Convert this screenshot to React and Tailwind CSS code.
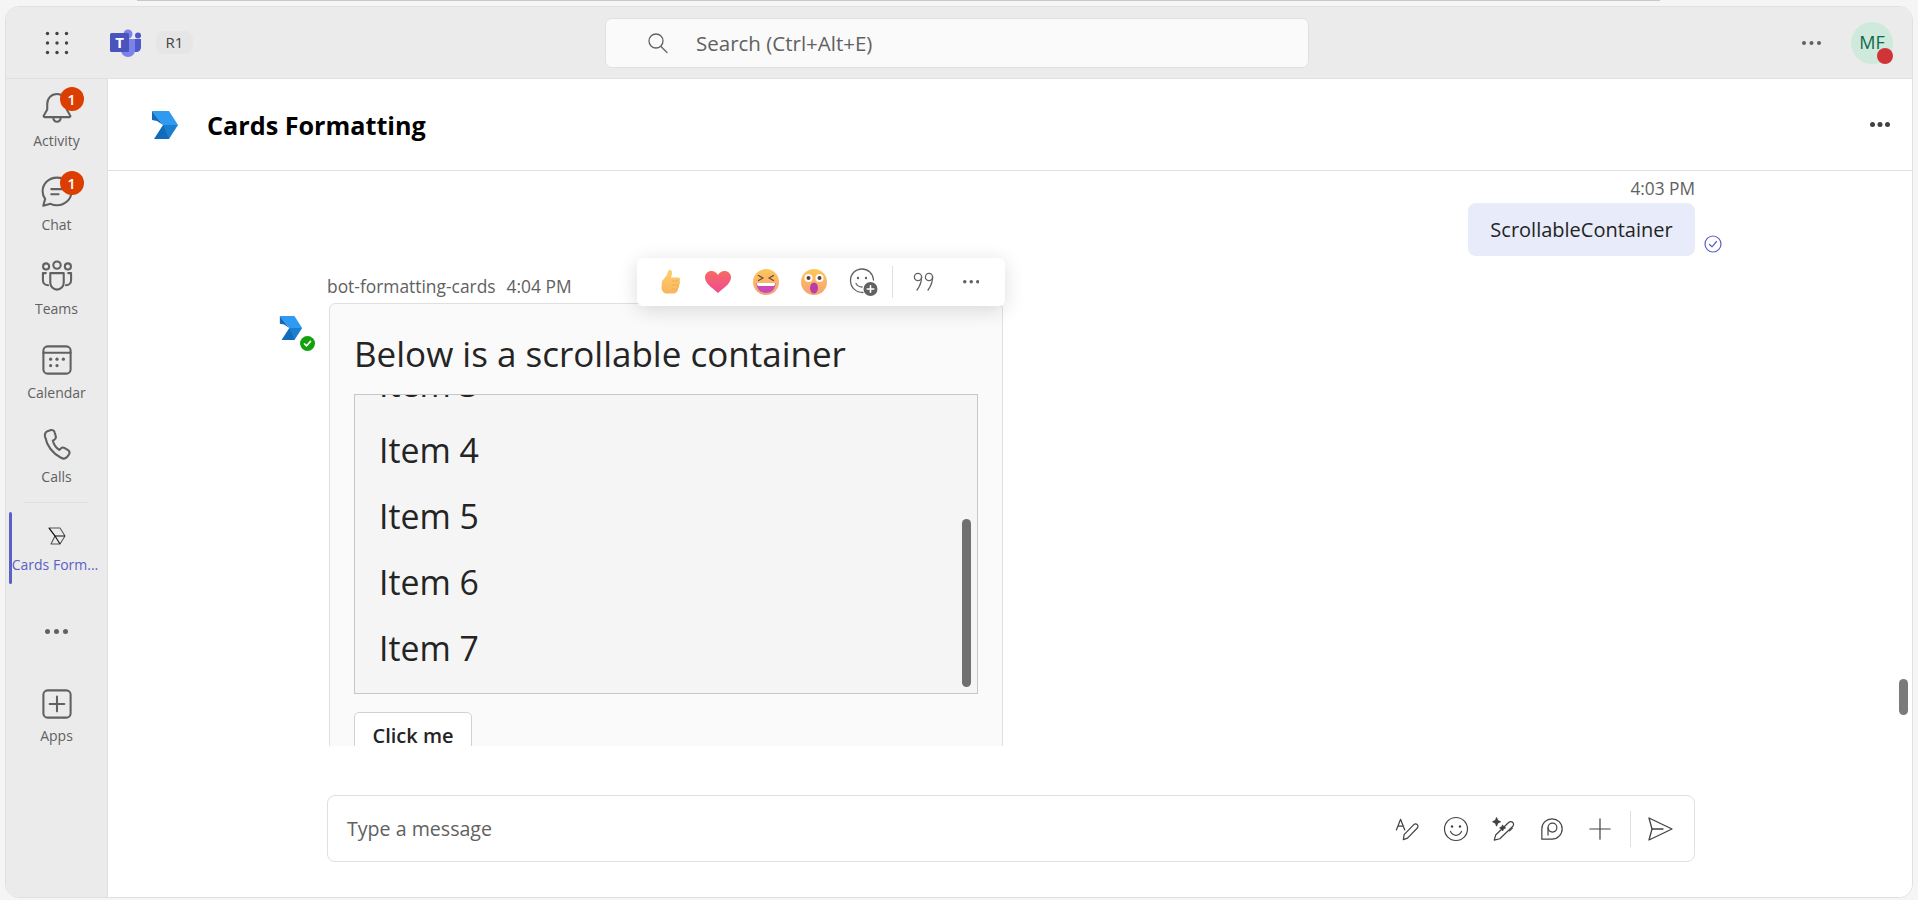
import { useId } from "react";

const Stroke = ({ size = 32, vb = "2 2 20 20", children, className = "" }) => (
  <svg width={size} height={size} viewBox={vb} fill="none" stroke="#616161" strokeWidth="1.3" strokeLinecap="round" strokeLinejoin="round" className={className}>
    {children}
  </svg>
);

const ChevronLogo = ({ w = 26, h = 28 }) => (
  <svg width={w} height={h} viewBox="0 0 26 28">
    <path d="M0 0H17L26 14H11Z" fill="#2f9bf0" />
    <path d="M0 0L11 14L5 10L0 9Z" fill="#0f6cbd" />
    <path d="M11 14H26L17 28H10Z" fill="#1b7fce" />
    <path d="M11 14L17 28H2Z" fill="#0f6cbd" />
  </svg>
);

const TeamsLogo = () => (
  <svg width="32" height="28" viewBox="0 0 32 28">
    <circle cx="28" cy="6.5" r="3" fill="#5059c9" />
    <path d="M22 10H31V18C31 21 29 23 26 23H22Z" fill="#5059c9" />
    <circle cx="18" cy="5" r="4.5" fill="#7b83eb" />
    <path d="M11 10H25V21C25 25 22 28 18 28C14 28 11 25 11 21Z" fill="#7b83eb" />
    <rect x="0" y="4" width="19" height="19" rx="1.5" fill="#4b53bc" />
    <text x="9.5" y="19" textAnchor="middle" fontSize="15" fontWeight="700" fill="#fff" fontFamily="Open Sans">T</text>
  </svg>
);

const NavIcons = {
  bell: (
    <Stroke>
      <path d="M12 3.2C8.4 3.2 5.9 6 5.9 9.5V13L3.7 16.8C3.5 17.2 3.7 17.7 4.2 17.7H19.8C20.3 17.7 20.5 17.2 20.3 16.8L18.1 13V9.5C18.1 6 15.6 3.2 12 3.2Z" />
      <path d="M9.6 17.9C9.8 19.6 10.8 20.6 12 20.6C13.2 20.6 14.2 19.6 14.4 17.9" />
    </Stroke>
  ),
  chat: (
    <Stroke>
      <path d="M12 3C7 3 3 6.8 3 11.6C3 13.4 3.6 15 4.6 16.3L3.4 20.6L8 19.4C9.2 20 10.6 20.3 12 20.3C17 20.3 21 16.5 21 11.8C21 7 17 3 12 3Z" />
      <path d="M8.4 10.2H15.6M8.4 13.4H13" />
    </Stroke>
  ),
  teams: (
    <Stroke>
      <circle cx="12" cy="5.2" r="2.3" />
      <circle cx="5.2" cy="6" r="1.9" />
      <circle cx="18.8" cy="6" r="1.9" />
      <path d="M7.8 10.2H16.2V16.2C16.2 18.6 14.3 20.5 12 20.5C9.7 20.5 7.8 18.6 7.8 16.2Z" />
      <path d="M5 10.2H3.2V14.6C3.2 16.4 4.6 17.8 6.4 17.8" />
      <path d="M19 10.2H20.8V14.6C20.8 16.4 19.4 17.8 17.6 17.8" />
    </Stroke>
  ),
  calendar: (
    <Stroke>
      <rect x="3.5" y="3.5" width="17" height="17" rx="2.6" />
      <path d="M3.5 7.5H20.5" />
      <g fill="#616161" stroke="none">
        <circle cx="8" cy="11.5" r="1" />
        <circle cx="12" cy="11.5" r="1" />
        <circle cx="16" cy="11.5" r="1" />
        <circle cx="8" cy="15.5" r="1" />
        <circle cx="12" cy="15.5" r="1" />
      </g>
    </Stroke>
  ),
  calls: (
    <Stroke>
      <path d="M8.2 3.3L6.5 3.8C5 4.3 4.2 5.7 4.5 7.3C5.7 13 9.6 18 14.5 20.6C16 21.4 17.7 21 18.6 19.7L19.4 18.6C20 17.7 19.8 16.5 18.9 15.9L16.8 14.6C16 14.1 15 14.2 14.4 14.8L13.4 15.7C11.4 14.3 10 12.2 9.4 9.9L10.5 9.2C11.2 8.7 11.4 7.8 11.2 7L10.5 4.7C10.2 3.6 9.2 3 8.2 3.3Z" />
    </Stroke>
  ),
  apps: (
    <Stroke>
      <rect x="3.5" y="3.5" width="17" height="17" rx="2.6" />
      <path d="M12 7.4V16.6M7.4 12H16.6" />
    </Stroke>
  ),
  cards: (
    <svg width="18" height="18" viewBox="0 0 18 18" fill="none" stroke="#555" strokeWidth="1.1" strokeLinejoin="round">
      <path d="M1 1H12L17 9L12 17H3L7 9Z" />
      <path d="M1 1L7 9H17" stroke="#111" />
      <path d="M7 9L12 17" stroke="#111" />
    </svg>
  ),
};

const NavItem = ({ icon, label, badge }) => (
  <div className="relative h-[84px] flex flex-col items-center pt-[13px]">
    <div className="relative w-[32px] h-[32px]">
      {NavIcons[icon]}
      {badge && (
        <span className="absolute -top-[5px] left-[19px] w-[24px] h-[24px] rounded-full bg-[#dc3e02] text-white text-[15px] font-semibold flex items-center justify-center">
          {badge}
        </span>
      )}
    </div>
    <span className="mt-[8px] text-[14px] leading-[18px] text-[#616161]">{label}</span>
  </div>
);

const Dots = ({ size = 4, gap = 3, color = "#616161" }) => (
  <svg width={size * 3 + gap * 2} height={size} viewBox={`0 0 ${size * 3 + gap * 2} ${size}`} fill={color}>
    <circle cx={size / 2} cy={size / 2} r={size / 2} />
    <circle cx={size * 1.5 + gap} cy={size / 2} r={size / 2} />
    <circle cx={size * 2.5 + gap * 2} cy={size / 2} r={size / 2} />
  </svg>
);

const GridDots = () => (
  <svg width="24" height="24" viewBox="0 0 24 24" fill="#424242">
    {[2.5, 12, 21.5].map((y) =>
      [2.5, 12, 21.5].map((x) => <circle key={`${x}-${y}`} cx={x} cy={y} r="1.7" />)
    )}
  </svg>
);

const Sidebar = () => (
  <div className="w-[102px] shrink-0 bg-[#ebebeb] border-r border-[#e0e0e0] flex flex-col">
    <NavItem icon="bell" label="Activity" badge="1" />
    <NavItem icon="chat" label="Chat" badge="1" />
    <NavItem icon="teams" label="Teams" />
    <NavItem icon="calendar" label="Calendar" />
    <NavItem icon="calls" label="Calls" />
    <div className="h-px mx-[18px] bg-[#e0e0e0] mt-[3px]" />
    <div className="relative h-[72px] mt-[9px] flex flex-col items-center pt-[15px]">
      <span className="absolute left-[3px] top-0 w-[3px] h-full rounded-sm bg-[#5b5fc7]" />
      {NavIcons.cards}
      <span className="mt-[11px] -ml-[3px] text-[14px] leading-[18px] text-[#5b5fc7] whitespace-nowrap">Cards Form...</span>
    </div>
    <div className="flex justify-center mt-[45px]">
      <Dots size={5} gap={4} />
    </div>
    <div className="flex flex-col items-center mt-[54px]">
      {NavIcons.apps}
      <span className="mt-[7px] text-[14px] leading-[18px] text-[#616161]">Apps</span>
    </div>
  </div>
);

const Header = () => (
  <div className="h-[72px] shrink-0 bg-[#ebebeb] border-b border-[#e0e0e0] flex items-center relative">
    <div className="ml-[39px]">
      <GridDots />
    </div>
    <div className="ml-[41px]">
      <TeamsLogo />
    </div>
    <span className="ml-[14px] w-[37px] h-[23px] rounded-[8px] bg-[#e6e6e6] text-[15px] text-[#424242] flex items-center justify-center">R1</span>
    <div className="ml-[412px] w-[704px] h-[50px] rounded-[7px] bg-[#fafafa] border border-[#e0e0e0] flex items-center pl-[41px]">
      <svg width="22" height="22" viewBox="0 0 22 22" fill="none" stroke="#616161" strokeWidth="1.3" strokeLinecap="round">
        <circle cx="9" cy="9" r="7" />
        <path d="M14 14.5L20 20.5" />
      </svg>
      <span className="ml-[27px] pt-[2px] text-[20.5px] text-[#616161]">Search (Ctrl+Alt+E)</span>
    </div>
    <div className="ml-[493px]">
      <Dots size={4} gap={3.5} />
    </div>
    <div className="relative ml-[30px] w-[42px] h-[42px] rounded-full bg-[#d0e9dd] flex items-center justify-center text-[18px] text-[#0e6b45]">
      MF
      <span className="absolute right-0 bottom-0 w-[16px] h-[16px] rounded-full bg-[#d13438]" />
    </div>
  </div>
);

const Emoji = ({ children }) => {
  return <svg width="28" height="28" viewBox="0 0 28 28">{children}</svg>;
};

const ReactionBar = () => {
  const id = useId();
  return (
    <div className="absolute left-0 -top-[45px] ml-[310px] w-[368px] h-[48px] rounded-[6px] bg-white shadow-[0_4px_20px_rgba(0,0,0,0.14)] flex items-center pl-[19px] z-10">
      <div className="w-[48px] pl-[2px]">
        <Emoji>
          <defs>
            <linearGradient id={`${id}t`} x1="0" y1="0" x2="0" y2="1">
              <stop offset="0" stopColor="#fdd06c" />
              <stop offset="1" stopColor="#f9b45e" />
            </linearGradient>
          </defs>
          <path d="M4 13C6 11 9 8 10.5 2.5C11 1 14 1.5 14 4.5C14 6.5 13.5 8 13 9.5H20C22.5 9.5 22.5 12 21.5 13C22.5 14.5 22 16 21 17C21.5 18.5 21 20 20 20.5C20 22.5 19 24.5 16.5 25.5H9C5.5 25.5 3.5 23 3.5 19Z" fill={`url(#${id}t)`} />
          <path d="M14 13H21M14 17H21M14 21H20" stroke="#f4ab55" strokeWidth="1" />
        </Emoji>
      </div>
      <div className="w-[48px]">
        <Emoji>
          <defs>
            <linearGradient id={`${id}h`} x1="0" y1="0" x2="0" y2="1">
              <stop offset="0" stopColor="#f86a63" />
              <stop offset="1" stopColor="#ee4a94" />
            </linearGradient>
          </defs>
          <path d="M14 25C10 21 1 16 1 9.5C1 5.5 4 3 7.5 3C10.5 3 12.8 4.8 14 7C15.2 4.8 17.5 3 20.5 3C24 3 27 5.5 27 9.5C27 16 18 21 14 25Z" fill={`url(#${id}h)`} />
        </Emoji>
      </div>
      <div className="w-[48px]">
        <Emoji>
          <defs>
            <linearGradient id={`${id}f`} x1="0" y1="0" x2="0" y2="1">
              <stop offset="0" stopColor="#fdc75a" />
              <stop offset="1" stopColor="#f8a177" />
            </linearGradient>
          </defs>
          <circle cx="14" cy="14" r="13" fill={`url(#${id}f)`} />
          <path d="M6.5 7.5L11 10L6.5 12.5M21.5 7.5L17 10L21.5 12.5" fill="none" stroke="#6b4a3c" strokeWidth="1.4" strokeLinecap="round" strokeLinejoin="round" />
          <path d="M4.5 15H23.5C23.5 21 19.5 25 14 25C8.5 25 4.5 21 4.5 15Z" fill="#c64db8" />
          <path d="M5 15H23C23 16.5 22.5 17.5 22 18H6C5.5 17.5 5 16.5 5 15Z" fill="#fff" />
        </Emoji>
      </div>
      <div className="w-[48px]">
        <Emoji>
          <circle cx="14" cy="14" r="13" fill={`url(#${id}f)`} />
          <circle cx="8.5" cy="10" r="4" fill="#fff" />
          <circle cx="19.5" cy="10" r="4" fill="#fff" />
          <circle cx="8.5" cy="10" r="2" fill="#5a3d33" />
          <circle cx="19.5" cy="10" r="2" fill="#5a3d33" />
          <ellipse cx="14" cy="20" rx="4" ry="5.5" fill="#b83fa5" />
        </Emoji>
      </div>
      <div className="w-[44px]">
        <svg width="30" height="30" viewBox="0 0 30 30" fill="none" stroke="#616161" strokeWidth="1.3" strokeLinecap="round">
          <path d="M15 25.5C8 25.5 2.5 20.5 2.5 13.5C2.5 7 7.5 2 14 2C20 2 25 6.5 25.5 13" />
          <circle cx="10" cy="11" r="1.2" fill="#616161" stroke="none" />
          <circle cx="18" cy="11" r="1.2" fill="#616161" stroke="none" />
          <path d="M8 16.5C9.5 19 11.5 20 14 20" />
          <circle cx="22.5" cy="22" r="7" fill="#616161" stroke="none" />
          <path d="M22.5 18.7V25.3M19.2 22H25.8" stroke="#fff" strokeWidth="1.6" />
        </svg>
      </div>
      <div className="w-px h-[32px] bg-[#e0e0e0]" />
      <div className="w-[61px] flex justify-center">
        <svg width="22" height="24" viewBox="0 0 22 24" fill="none" stroke="#616161" strokeWidth="1.3" strokeLinecap="round">
          <circle cx="5" cy="7" r="3.6" />
          <path d="M8.6 7C8.6 12 7 16 4 20" />
          <circle cx="16" cy="7" r="3.6" />
          <path d="M19.6 7C19.6 12 18 16 15 20" />
        </svg>
      </div>
      <div className="w-[30px] flex justify-center ml-[2px]">
        <Dots size={3.5} gap={3} />
      </div>
    </div>
  );
};

const Card = () => (
  <div className="relative ml-[2px] w-[674px] h-[500px] bg-[#fafafa] border border-[#e0e0e0] rounded-[6px] px-[24px] pt-[24px]">
    <div className="mt-[1px] text-[35px] leading-[50px] font-medium text-[#242424] whitespace-nowrap">Below is a scrollable container</div>
    <div className="relative mt-[15px] h-[300px] bg-[#f5f5f5] border border-[#c7c7c7] overflow-hidden pl-[24px]">
      <div className="-mt-[44px]">
        {["Item 3", "Item 4", "Item 5", "Item 6", "Item 7"].map((item) => (
          <div key={item} className="h-[66px] flex items-center text-[33.8px] text-[#242424]">
            {item}
          </div>
        ))}
      </div>
      <span className="absolute right-[6px] top-[124px] w-[9px] h-[168px] rounded-full bg-[#707070]" />
    </div>
    <div className="mt-[18px] w-[118px] h-[48px] bg-white border border-[#d1d1d1] rounded-[5px] flex items-center justify-center text-[20px] font-semibold text-[#242424]">
      Click me
    </div>
  </div>
);

const Messages = () => (
  <div className="relative flex-1 min-h-0 overflow-hidden pt-[6px]">
    <div className="ml-[219px] w-[1368px]">
      <div className="text-right text-[17.3px] leading-[24px] text-[#616161]">4:03 PM</div>
      <div className="flex justify-end mt-[2px]">
        <div className="relative w-[227px] h-[53px] rounded-[8px] bg-[#e8ebfa] text-[20px] text-[#242424] flex items-center justify-center">
          ScrollableContainer
          <svg className="absolute -right-[27px] bottom-[3px]" width="18" height="18" viewBox="0 0 18 18" fill="none" stroke="#5b5fc7" strokeWidth="1.2" strokeLinecap="round" strokeLinejoin="round">
            <circle cx="9" cy="9" r="8" />
            <path d="M5.5 9.5L8 11.8L12.5 6.5" />
          </svg>
        </div>
      </div>
    </div>
    <div className="flex ml-[171px] mt-[18px]">
      <div className="relative w-[48px] pt-[42px]">
        <ChevronLogo w={24} h={24} />
        <span className="absolute left-[21px] top-[62px] w-[15px] h-[15px] rounded-full bg-[#13a10e] flex items-center justify-center">
          <svg width="9" height="9" viewBox="0 0 9 9" fill="none" stroke="#fff" strokeWidth="1.6" strokeLinecap="round" strokeLinejoin="round">
            <path d="M1.5 4.8L3.6 6.8L7.5 2.4" />
          </svg>
        </span>
      </div>
      <div className="relative">
        <div className="h-[24px] mb-[5px] text-[17.4px] leading-[24px] text-[#616161] whitespace-nowrap">
          bot-formatting-cards<span className="ml-[11px]">4:04 PM</span>
        </div>
        <div className="relative">
          <ReactionBar />
          <Card />
        </div>
      </div>
    </div>
    <span className="absolute right-[4px] top-[508px] w-[9px] h-[36px] rounded-full bg-[#7a7a7a]" />
  </div>
);

const Composer = () => (
  <div className="h-[151px] shrink-0 pt-[49px] pl-[219px]">
    <div className="w-[1368px] h-[67px] rounded-[8px] border border-[#e0e0e0] bg-white flex items-center pl-[19px]">
      <span className="text-[19.6px] text-[#616161]">Type a message</span>
      <div className="ml-auto flex items-center">
        <div className="w-[48px] flex justify-center">
          <svg width="26" height="26" viewBox="0 0 28 28" fill="none" stroke="#424242" strokeWidth="1.3" strokeLinejoin="round" strokeLinecap="round">
            <path d="M1.5 15L6 3.5L10.5 15M3 11H9" />
            <path d="M9 25.5L9.8 20L20 9.5C21.2 8.3 23 8.3 24 9.3C25 10.3 25 12 23.8 13.2L13.5 23.8Z" />
          </svg>
        </div>
        <div className="w-[48px] flex justify-center">
          <svg width="26" height="26" viewBox="0 0 26 26" fill="none" stroke="#424242" strokeWidth="1.2" strokeLinecap="round">
            <circle cx="13" cy="13" r="11.5" />
            <circle cx="9" cy="10.5" r="1.2" fill="#424242" stroke="none" />
            <circle cx="17" cy="10.5" r="1.2" fill="#424242" stroke="none" />
            <path d="M7.5 15.5C9 18.5 11 19.3 13 19.3C15 19.3 17 18.5 18.5 15.5" />
          </svg>
        </div>
        <div className="w-[48px] flex justify-center">
          <svg width="26" height="26" viewBox="0 0 28 28" fill="none" stroke="#424242" strokeWidth="1.3" strokeLinejoin="round" strokeLinecap="round">
            <path d="M3.5 26L5 20.5L19 7C20.2 5.8 22.5 5.8 23.5 7C24.8 8.3 24.5 10.2 23.3 11.3L9.5 24.5Z" />
            <path d="M20 16L23 13" />
            <path d="M6 2L7.2 5L10 6.2L7.2 7.4L6 10.4L4.8 7.4L2 6.2L4.8 5Z" fill="#424242" />
            <path d="M12.5 10L13.3 12L15.3 12.8L13.3 13.6L12.5 15.6L11.7 13.6L9.7 12.8L11.7 12Z" fill="#424242" />
          </svg>
        </div>
        <div className="w-[48px] flex justify-center">
          <svg width="24" height="24" viewBox="0 0 26 26" fill="none" stroke="#424242" strokeWidth="1.3" strokeLinejoin="round">
            <path d="M2 24V13C2 6.5 7 2 13 2C19 2 24 6.5 24 13C24 19 19 24 13 24Z" />
            <circle cx="13.5" cy="11.5" r="4.8" />
            <path d="M8.7 11.5V20" />
          </svg>
        </div>
        <div className="w-[48px] flex justify-center">
          <svg width="24" height="24" viewBox="0 0 26 26" fill="none" stroke="#424242" strokeWidth="1.3" strokeLinecap="round">
            <path d="M13 2V24M2 13H24" />
          </svg>
        </div>
        <div className="ml-[6px] w-px h-[36px] bg-[#e0e0e0]" />
        <div className="ml-[5px] mr-[10px] w-[48px] flex justify-center">
          <svg width="26" height="26" viewBox="0 0 26 26" fill="none" stroke="#424242" strokeWidth="1.3" strokeLinejoin="round" strokeLinecap="round">
            <path d="M2 2L25 13L2 24L5 13Z" />
            <path d="M5 13H16" />
          </svg>
        </div>
      </div>
    </div>
  </div>
);

export default function App() {
  return (
    <div className="h-[900px] bg-[#f5f5f5] font-['Open_Sans',sans-serif] overflow-hidden">
      <div className="h-px ml-[137px] mr-[258px] bg-[#c8c8c8]" />
      <div className="ml-[5px] mr-[5px] mt-[5px] h-[892px] rounded-[14px] border border-[#e0e0e0] overflow-hidden flex flex-col bg-white">
        <Header />
        <div className="flex flex-1 min-h-0">
          <Sidebar />
          <div className="flex-1 min-w-0 flex flex-col bg-white">
            <div className="h-[92px] shrink-0 border-b border-[#e0e0e0] flex items-center pl-[44px] pr-[22px]">
              <ChevronLogo />
              <span className="ml-[29px] pt-[2px] text-[25.2px] font-bold text-black">Cards Formatting</span>
              <div className="ml-auto">
                <Dots size={5} gap={2.5} color="#424242" />
              </div>
            </div>
            <Messages />
            <Composer />
          </div>
        </div>
      </div>
    </div>
  );
}
